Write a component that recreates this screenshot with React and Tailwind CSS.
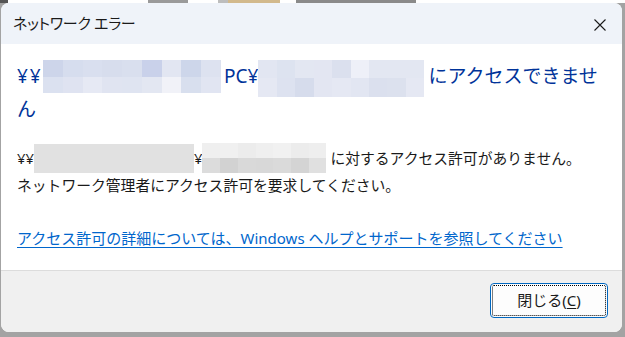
import React from 'react';

const jp = "[font-family:'Noto_Sans','Noto_Sans_CJK_JP',sans-serif]";

const mosaicA = [
  ['#cdd5ea', '#d6ddee', '#d9dfef', '#d7dded', '#d9dfee', '#c9d1ea', '#e2e6f2', '#cdd6ea', '#dde2f0'],
  ['#dbe1f0', '#dfe3f1', '#e6e9f4', '#e0e4f1', '#dfe4f1', '#e3e7f2', '#f1f2f8', '#d8dfee', '#e1e5f2'],
];
const mosaicB = [
  ['#e2e6f2', '#dde3f0', '#e3e7f2', '#e3e6f2', '#dbe0ee', '#eef0f8', '#e3e7f2', '#e3e7f2', '#e3e7f2'],
  ['#e5e8f3', '#dde2f0', '#d6dcec', '#e3e6f2', '#e5e8f3', '#e2e6f2', '#dbe0ee', '#dce1ee', '#e5e8f3'],
];
const mosaicC = [
  ['#efefef', '#f0f0f0', '#ececec', '#efefef', '#f1f1f1', '#ececec', '#eeeeee'],
  ['#dcdcdc', '#d2d2d2', '#d9d9d9', '#d8d8d8', '#dadada', '#d4d4d4', '#e0e0e0'],
];

const Mosaic = ({ rows, className }) => (
  <div className={`flex flex-col shrink-0 ${className}`}>
    {rows.map((row, i) => (
      <div key={i} className="flex flex-1">
        {row.map((c, j) => (
          <div key={j} className="flex-1" style={{ backgroundColor: c }} />
        ))}
      </div>
    ))}
  </div>
);

const App = () => {
  return (
    <div className="w-[625px] h-[337px] bg-[#a3a3a3] flex flex-col overflow-hidden">
      {/* desktop strip above the dialog */}
      <div className="h-[3px] bg-white flex shrink-0">
        <div className="w-[8px] bg-[#555]" />
        <div className="w-[140px]" />
        <div className="w-[40px] bg-[#9a9a9a]" />
        <div className="w-[30px]" />
        <div className="w-[10px] bg-[#bdbdbd]" />
        <div className="w-[52px] bg-[#d2b98c]" />
        <div className="w-[16px]" />
        <div className="w-[120px] bg-[#8a8a8a]" />
      </div>

      <div className="flex flex-1">
        <div className={`ml-[1px] w-[621px] h-[329px] flex flex-col bg-white rounded-tl-[8px] rounded-tr-[8px] rounded-b-[8px] overflow-hidden ${jp}`}>
          {/* title bar */}
          <div className="h-[41px] bg-[#eff3f9] flex items-center justify-between pl-[12px] pr-[16px] shrink-0">
            <span className="text-[15px] text-[#1a1a1a] [font-feature-settings:'palt'] tracking-[-0.3px]">ネットワーク エラー</span>
            <svg width="12" height="12" viewBox="0 0 12 12" className="mt-[2px]">
              <path d="M0.5 0.5 L11.5 11.5 M11.5 0.5 L0.5 11.5" stroke="#1a1a1a" strokeWidth="1.1" />
            </svg>
          </div>

          {/* body */}
          <div className="flex-1 pl-[16px] pt-[16px] flex flex-col">
            <div className="text-[19px] text-[#003399]">
              <div className="h-[33px] flex items-center">
                <span className="w-[26px] tracking-[2px]">¥¥</span>
                <Mosaic rows={mosaicA} className="w-[178px] h-[33px]" />
                <span className="ml-[3px]">PC¥</span>
                <Mosaic rows={mosaicB} className="w-[166px] h-[37px] mt-[3px]" />
                <span className="ml-[4px]">にアクセスできませ</span>
              </div>
              <div className="h-[33px] flex items-center">ん</div>
            </div>

            <div className="mt-[17px] text-[14.8px] text-[#1a1a1a]">
              <div className="h-[30px] flex items-center">
                <span>¥¥</span>
                <div className="w-[160px] h-[29px] bg-[#e1e1e1] shrink-0" />
                <span>¥</span>
                <Mosaic rows={mosaicC} className="w-[124px] h-[30px]" />
                <span className="ml-[4px]">に対するアクセス許可がありません。</span>
              </div>
              <div className="h-[24px] flex items-center">
                ネットワーク管理者にアクセス許可を要求してください。
              </div>
            </div>

            <div className="mt-[30px] text-[15px]">
              <span className="text-[#0066cc] underline underline-offset-[3px]">
                アクセス許可の詳細については、Windows ヘルプとサポートを参照してください
              </span>
            </div>
          </div>

          {/* footer */}
          <div className="h-[62px] bg-[#f0f0f0] border-t border-[#dcdcdc] flex justify-end items-start pt-[12px] pr-[14px] shrink-0">
            <button className="relative w-[118px] h-[35px] bg-[#fdfdfd] border border-[#0067c0] rounded-[4px] text-[15px] text-[#1a1a1a] flex items-center justify-center">
              <div className="absolute inset-[1px] border border-dotted border-black rounded-[2px]" />
              <span>
                閉じる(<span className="underline underline-offset-[2px]">C</span>)
              </span>
            </button>
          </div>
        </div>
      </div>
    </div>
  );
};

export default App;
